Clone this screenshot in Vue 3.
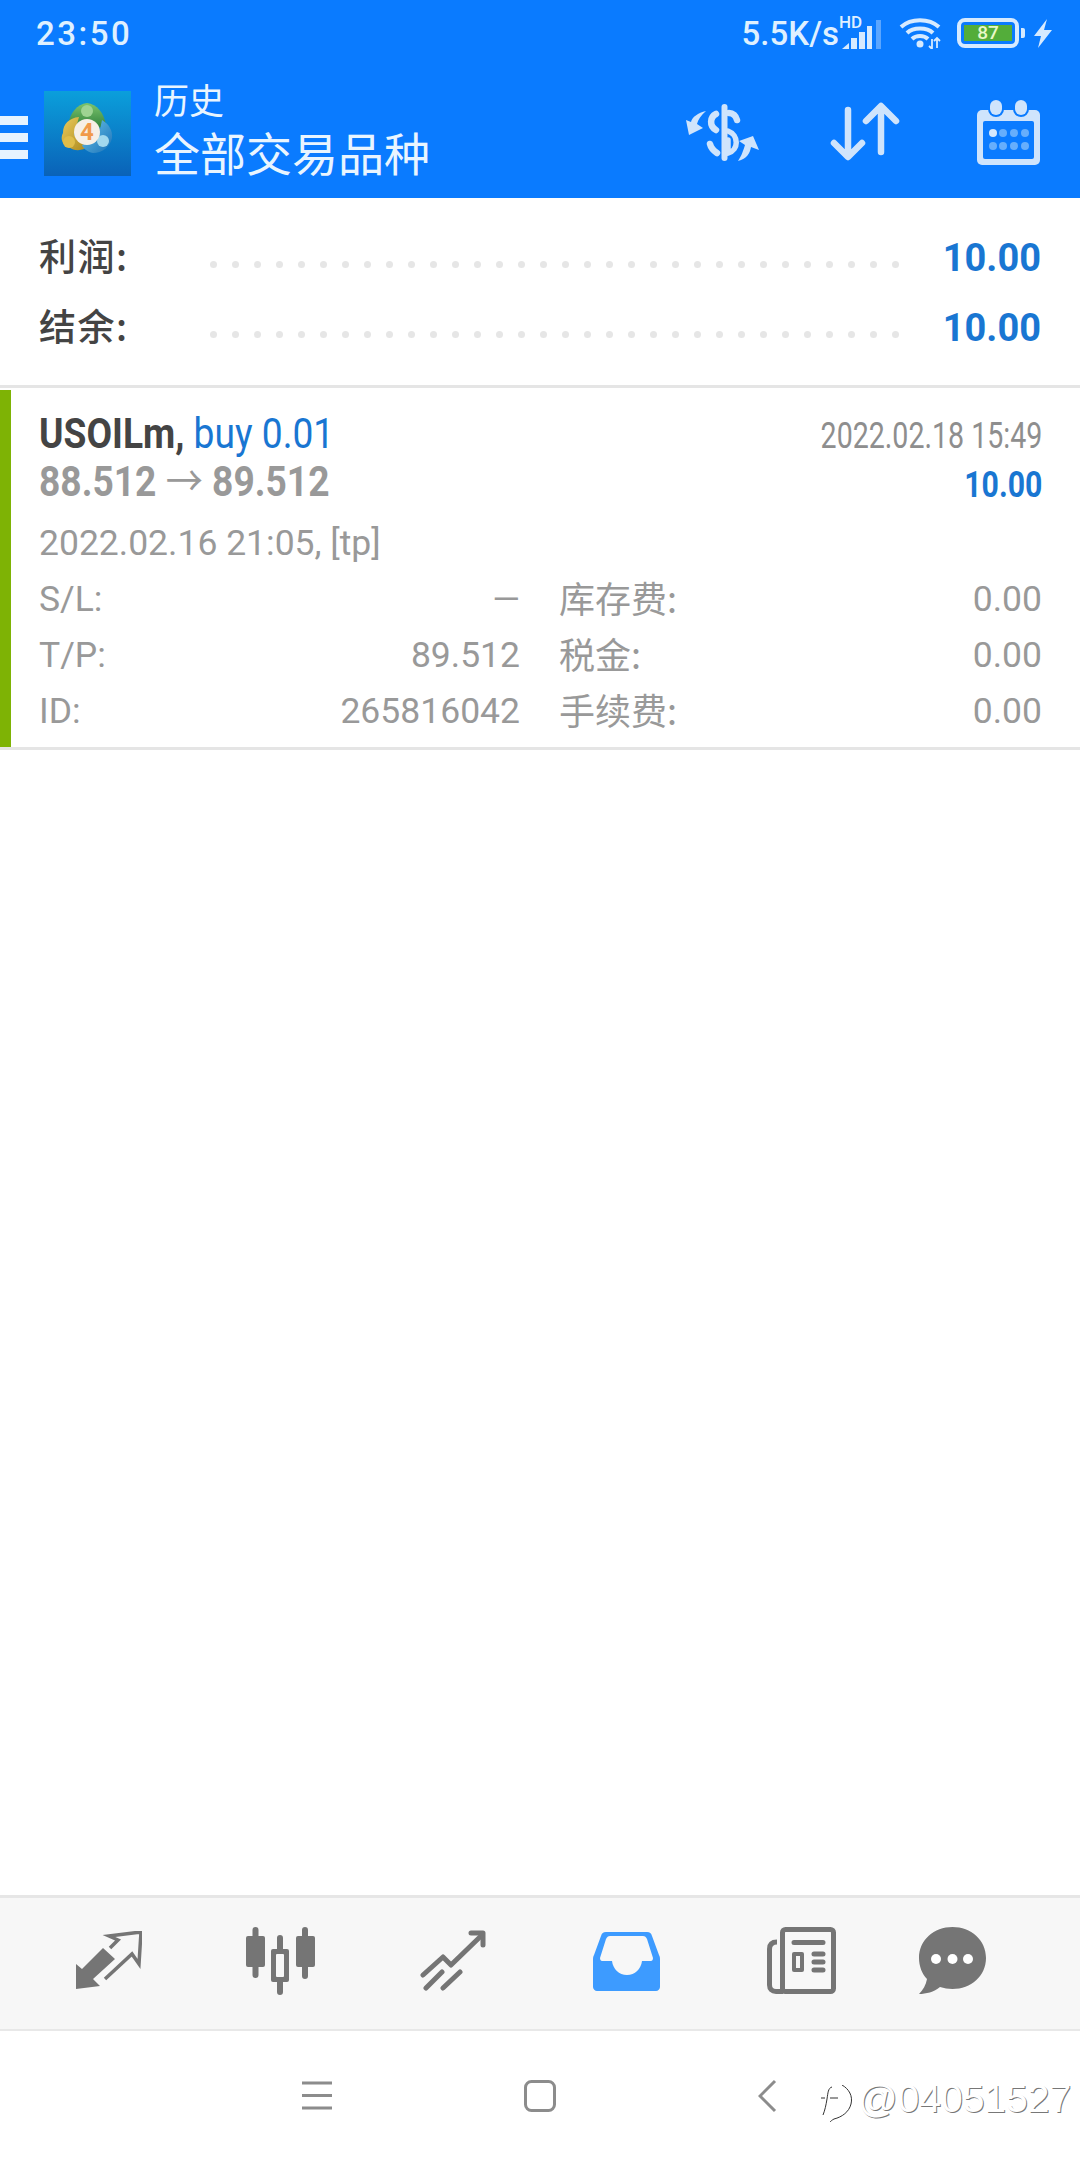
<script setup>
const dots = Array.from({ length: 32 })
const summary = [
  { label: '利润:', value: '10.00' },
  { label: '结余:', value: '10.00' }
]
const details = [
  ['S/L:', '—', '库存费:', '0.00'],
  ['T/P:', '89.512', '税金:', '0.00'],
  ['ID:', '265816042', '手续费:', '0.00']
]
</script>

<template>
  <div class="page">
    <header class="head">
      <div class="status">
        <span class="time">23:50</span>
        <div class="status-right">
          <span class="speed">5.5K/s</span>
          <span class="signal">
            <span class="hd">HD</span>
            <svg width="39" height="29" viewBox="0 0 39 29">
              <path d="M0 29L7 23V29Z" fill="#d6eaff" />
              <rect x="9" y="18" width="6" height="11" fill="#d6eaff" />
              <rect x="17" y="12" width="6" height="17" fill="#d6eaff" />
              <rect x="25" y="6" width="5" height="23" fill="#d6eaff" />
              <rect x="34" y="0" width="5" height="29" fill="#5ba6ff" />
            </svg>
          </span>
          <svg class="wifi" width="42" height="31" viewBox="0 0 42 31">
            <g fill="none" stroke="#d6eaff" stroke-width="4">
              <path d="M2 9C12 0 30 0 40 9" />
              <path d="M8 15C14 9 28 9 34 15" />
              <path d="M13 21C17 17 25 17 29 21" />
            </g>
            <circle cx="21" cy="26" r="3.5" fill="#d6eaff" />
            <path d="M33 21V31M30 28L33 31M38 20V30M35 23L38 20L41 23" fill="none" stroke="#d6eaff" stroke-width="1.8" />
          </svg>
          <span class="battery">
            <span class="battery-fill">87</span>
          </span>
          <span class="nub"></span>
          <svg class="bolt" width="18" height="29" viewBox="0 0 18 29">
            <path d="M13 0L0 17H7L4 29L18 11H10Z" fill="#d6eaff" />
          </svg>
        </div>
      </div>
      <div class="toolbar">
        <div class="burger"><i></i><i></i><i></i></div>
        <svg class="logo" width="87" height="85" viewBox="0 0 87 85">
          <defs>
            <linearGradient id="logoBg" x1="0" y1="0" x2="0" y2="1">
              <stop offset="0" stop-color="#0b9fdb" />
              <stop offset="1" stop-color="#0a62b8" />
            </linearGradient>
            <linearGradient id="green" x1="0" y1="0" x2="0" y2="1">
              <stop offset="0" stop-color="#7cc46c" />
              <stop offset="1" stop-color="#2d7f3c" />
            </linearGradient>
            <linearGradient id="gold" x1="0" y1="0" x2="1" y2="1">
              <stop offset="0" stop-color="#eccb5c" />
              <stop offset="1" stop-color="#a8871c" />
            </linearGradient>
            <linearGradient id="aqua" x1="0" y1="0" x2="1" y2="1">
              <stop offset="0" stop-color="#6cc4ea" />
              <stop offset="1" stop-color="#1a72b8" />
            </linearGradient>
          </defs>
          <rect width="87" height="85" fill="url(#logoBg)" />
          <path d="M24 34C26 22 33 13 43 12C53 13 60 22 62 34L52 38H34Z" fill="url(#green)" />
          <circle cx="43" cy="20" r="6" fill="#9ed392" />
          <path d="M35 26C25 27 19 33 19 42C16 47 18 55 25 56C31 61 40 60 45 54L30 44Z" fill="url(#gold)" />
          <circle cx="25" cy="51" r="6" fill="#dfbd4a" />
          <path d="M58 29C65 33 69 40 68 47C66 56 58 62 49 62C43 61 39 57 38 54L54 48Z" fill="url(#aqua)" />
          <circle cx="59" cy="50" r="6" fill="#a2d8ee" />
          <circle cx="43" cy="41" r="13" fill="#f6efe6" />
          <text x="43" y="49" text-anchor="middle" class="logo-four">4</text>
        </svg>
        <div class="titles">
          <div class="title-sm">历史</div>
          <div class="title-lg">全部交易品种</div>
        </div>
        <div class="actions">
          <svg width="74" height="57" viewBox="0 0 74 57">
            <rect x="36.500" y="0" width="6" height="57" rx="3" fill="#cfe4fc" />
            <g fill="none" stroke="#cfe4fc" stroke-width="6.500" stroke-linecap="round">
              <path d="M44 9C48 9 51 12 52 16" />
              <path d="M31 10C25 13 24 22 31 26" />
              <path d="M43 27C54 31 54 46 43 49V36" stroke-width="5.500" />
              <path d="M25 40C26 44 29 47 32 49" />
            </g>
            <path d="M21 7C13 9 7 13 6 18L1 16L4 31L18 24L12 20C13 16 16 11 21 7Z" fill="#cfe4fc" />
            <path d="M53 57C62 55 65 49 66 43L74 46L68 32L54 37L60 41C58 47 57 51 53 57Z" fill="#cfe4fc" />
          </svg>
          <svg class="swap" width="68" height="58" viewBox="0 0 68 58">
            <g fill="none" stroke="#cfe4fc" stroke-width="6.500" stroke-linecap="round" stroke-linejoin="round">
              <path d="M17 8V54M3 41L17 55L31 41" />
              <path d="M50 50V5M35 19L50 4L65 19" />
            </g>
          </svg>
          <svg width="63" height="65" viewBox="0 0 63 65">
            <rect y="10" width="63" height="55" rx="5" fill="#cfe4fc" />
            <rect x="6" y="21" width="51" height="38" rx="2" fill="#0a7bff" />
            <rect x="11" y="-2" width="16" height="19" rx="8" fill="#0a7bff" />
            <rect x="36" y="-2" width="16" height="19" rx="8" fill="#0a7bff" />
            <rect x="13" y="0" width="12" height="15" rx="6" fill="#cfe4fc" />
            <rect x="38" y="0" width="12" height="15" rx="6" fill="#cfe4fc" />
            <circle cx="16" cy="33" r="4" fill="#d5e8fd" />
            <g fill="#66aefc">
              <circle cx="26" cy="33" r="4" /><circle cx="37" cy="33" r="4" /><circle cx="48" cy="33" r="4" />
              <circle cx="16" cy="46" r="4" /><circle cx="26" cy="46" r="4" /><circle cx="37" cy="46" r="4" /><circle cx="48" cy="46" r="4" />
            </g>
          </svg>
        </div>
      </div>
    </header>

    <section class="summary">
      <div v-for="row in summary" :key="row.label" class="sum-row">
        <span class="sum-label">{{ row.label }}</span>
        <span class="dots"><i v-for="(d, i) in dots" :key="i"></i></span>
        <span class="sum-value">{{ row.value }}</span>
      </div>
    </section>

    <section class="card">
      <div class="card-top">
        <div class="card-left">
          <div class="line-title cond"><b>USOILm,</b> <span class="blue">buy 0.01</span></div>
          <div class="line-price cond">88.512 <span class="arrow">→</span> 89.512</div>
        </div>
        <div class="card-right">
          <div class="close-time cond-r">2022.02.18 15:49</div>
          <div class="profit cond-r">10.00</div>
        </div>
      </div>
      <div class="open-time">2022.02.16 21:05, [tp]</div>
      <div v-for="row in details" :key="row[0]" class="detail">
        <span>{{ row[0] }}</span>
        <span class="val">{{ row[1] }}</span>
        <span class="cn">{{ row[2] }}</span>
        <span class="val">{{ row[3] }}</span>
      </div>
    </section>

    <main class="blank"></main>

    <nav class="tabs">
      <svg width="67" height="59" viewBox="0 0 67 59">
        <path d="M1 33L7 38L28 17L40 28L18 48L25 55L1 58Z" fill="#757575" />
        <path d="M35 17L43 9L34 5L66 1L64 33L57 23L30 48" fill="none" stroke="#757575" stroke-width="3.500" />
      </svg>
      <svg class="tab-candle" width="70" height="68" viewBox="0 0 70 68">
        <g stroke="#757575" stroke-width="6" stroke-linecap="round">
          <path d="M10.500 3V48M35 11V65M60 3V49" />
        </g>
        <rect x="1" y="9" width="19" height="31" rx="2" fill="#757575" />
        <rect x="51" y="9" width="19" height="31" rx="2" fill="#757575" />
        <rect x="26" y="22" width="18" height="33" rx="2" fill="#757575" />
        <rect x="31" y="27" width="8" height="23" rx="1" fill="#f7f7f7" />
      </svg>
      <svg width="66" height="61" viewBox="0 0 66 61">
        <g fill="none" stroke="#757575" stroke-width="5" stroke-linecap="round" stroke-linejoin="round">
          <path d="M3 45L23 27L31 35L62 5" />
          <path d="M51 3H63V15" />
          <path d="M22 42L6 58M40 42L23 58" />
        </g>
      </svg>
      <svg class="tab-inbox" width="67" height="60" viewBox="0 0 67 60">
        <path d="M13 1H54C57 1 58 2 59 5L66 24C67 26 67 27 67 29V56C67 58 65 60 63 60H4C2 60 0 58 0 56V29C0 27 0 26 1 24L8 5C9 2 10 1 13 1Z" fill="#3d9bff" />
        <path d="M17 5H50C52 5 53 6 54 8L60 27C60 29 59 30 58 30H49C48 38 42 44 34 44C26 44 20 38 19 30H9C8 30 7 29 7 27L13 8C14 6 15 5 17 5Z" fill="#f7f7f7" />
      </svg>
      <svg class="tab-news" width="69" height="67" viewBox="0 0 69 67">
        <rect x="15.500" y="2.500" width="51" height="62" rx="3" fill="none" stroke="#757575" stroke-width="5" />
        <path d="M10 15C5 15 2.500 17 2.500 22V58C2.500 62 5 64.500 9 64.500H16" fill="none" stroke="#757575" stroke-width="5" />
        <path d="M27 15.500H56M47 27H56M47 35H56M47 43H56" fill="none" stroke="#757575" stroke-width="5" stroke-linecap="round" />
        <rect x="25" y="25" width="12" height="20" rx="2" fill="#757575" />
        <rect x="29" y="29" width="4" height="12" fill="#f7f7f7" />
      </svg>
      <svg class="chat" width="67" height="67" viewBox="0 0 67 67">
        <path d="M33.500 0C52 0 67 13 67 31C67 49 52 62 33.500 62C29 62 25 61 21 60C15 65 7 67 0 67C4 63 7 58 8 52C3 47 0 39 0 31C0 13 15 0 33.500 0Z" fill="#757575" />
        <circle cx="17" cy="32" r="5" fill="#fff" /><circle cx="33.500" cy="32" r="5" fill="#fff" /><circle cx="49" cy="32" r="5" fill="#fff" />
      </svg>
    </nav>

    <footer class="sysnav">
      <svg class="nav-menu" width="30" height="29" viewBox="0 0 30 29">
        <path d="M0 2H30M0 14.500H30M0 27H30" stroke="#8c8c8c" stroke-width="3" />
      </svg>
      <svg class="nav-home" width="32" height="32" viewBox="0 0 32 32">
        <rect x="1.500" y="1.500" width="29" height="29" rx="6" fill="none" stroke="#8c8c8c" stroke-width="3" />
      </svg>
      <svg class="nav-back" width="19" height="34" viewBox="0 0 19 34">
        <path d="M17 2L2 17L17 32" fill="none" stroke="#8c8c8c" stroke-width="3" />
      </svg>
      <div class="mark">
        <svg width="34" height="38" viewBox="0 0 34 38">
          <g fill="none" stroke="#333" stroke-width="1">
            <path d="M12 2C8 3 8 8 7 14C6 20 5 25 3 30" />
            <path d="M1 13H5M10 13H18" />
            <path d="M22 0C29 4 33 11 31 19C29 27 22 32 14 34C12 35 11 36 10 37" />
          </g>
        </svg>
        <span>@04051527</span>
      </div>
    </footer>
  </div>
</template>

<style scoped>
.page {
  position: relative;
  width: 1080px;
  height: 2160px;
  display: flex;
  flex-direction: column;
  overflow: hidden;
  background: #fff;
  font-family: Roboto, "Noto Sans CJK SC", sans-serif;
}
.head { background: #0a7bff; color: #fff; flex: none; }
.status {
  height: 66px;
  display: flex;
  align-items: center;
  justify-content: space-between;
  padding: 0 28px 0 36px;
  color: #dff0ff;
}
.time { font-size: 33px; font-weight: 500; letter-spacing: 2.500px; }
.status-right { display: flex; align-items: center; }
.speed { font-size: 33px; font-weight: 500; margin-right: 3px; }
.signal { position: relative; display: block; width: 39px; height: 29px; margin-top: 2px; }
.signal svg { display: block; }
.hd {
  position: absolute;
  left: -3px;
  top: -6px;
  font-size: 17px;
  font-weight: 500;
  line-height: 17px;
}
.wifi { margin-left: 18px; }
.battery {
  box-sizing: border-box;
  margin-left: 16px;
  width: 62px;
  height: 30px;
  border: 4px solid #d6eaff;
  border-radius: 8px;
  padding: 3px 3px;
  display: block;
}
.battery-fill {
  display: block;
  height: 16px;
  line-height: 16px;
  background: #53ad3a;
  text-align: center;
  font-size: 19px;
  font-weight: 500;
  color: #e8f8c8;
}
.nub { width: 4px; height: 10px; margin-left: 2px; background: #d6eaff; border-radius: 0 2px 2px 0; }
.bolt { margin-left: 9px; }
.toolbar { height: 132px; display: flex; align-items: center; padding-right: 40px; }
.burger { width: 28px; display: flex; flex-direction: column; gap: 8px; margin-top: 10px; }
.burger i { display: block; height: 9px; background: #e6f3ff; }
.logo { margin-left: 16px; margin-top: 3px; }
.titles { margin-left: 21px; margin-top: 6px; }
.title-sm { font-size: 35px; line-height: 40px; color: #e9f5ff; margin-top: -3px; margin-left: 2px; }
.title-lg { font-size: 46px; line-height: 60px; color: #e9f5ff; margin-left: 2px; margin-top: 2px; }
.actions { margin-left: auto; display: flex; align-items: center; gap: 75px; }
.actions svg { overflow: visible; }
.actions .swap { margin: -2px 3px 0 -3px; }
.logo-four { font: 700 24px Roboto, sans-serif; fill: #f19a4a; }

.summary { flex: none; height: 190px; box-sizing: border-box; padding: 25px 39px 0 39px; border-bottom: 3px solid #e5e5e5; }
.sum-row { height: 70px; display: flex; align-items: center; }
.sum-label { width: 171px; font-size: 37px; letter-spacing: 1.500px; font-weight: 500; color: #444; font-family: "Noto Sans CJK SC", sans-serif; margin-bottom: 7px; }
.dots { display: flex; gap: 15px; margin-top: 13px; }
.dots i { display: block; width: 7px; height: 7px; border-radius: 50%; background: #e6e6e6; }
.sum-value { margin-left: auto; font-size: 38px; font-weight: 700; color: #1976d2; }

.card {
  flex: none;
  box-sizing: border-box;
  margin-top: 2px;
  height: 360px;
  background: linear-gradient(#7eb305, #7eb305) left top / 11px 100% no-repeat;
  background-clip: padding-box;
  border-bottom: 3px solid #e5e5e5;
  padding: 21px 38px 0 39px;
  color: #999;
}
.card-top { display: flex; justify-content: space-between; height: 94px; }
.cond { transform: scaleX(0.885); transform-origin: left center; white-space: nowrap; }
.cond-r { transform-origin: right center; white-space: nowrap; text-align: right; }
.line-title { font-size: 42px; line-height: 46px; color: #444; }
.blue { color: #1976d2; }
.line-price { font-size: 42px; line-height: 41px; font-weight: 700; color: #999; }
.arrow { font-weight: 400; font-family: "Noto Sans CJK SC", sans-serif; }
.close-time { font-size: 36px; line-height: 46px; margin-top: 2px; color: #8e8e8e; transform: scaleX(0.794); }
.profit { font-size: 36px; line-height: 48px; margin-top: 2px; font-weight: 700; color: #1976d2; transform: scaleX(0.84); }
.open-time { font-size: 35.500px; line-height: 48px; margin-top: 14px; margin-bottom: 4px; color: #999; }
.detail { display: grid; grid-template-columns: 340px 141px 39px 1fr auto; height: 56px; line-height: 56px; font-size: 35.500px; }
.detail span { grid-row: 1; }
.detail span:nth-child(1) { grid-column: 1; }
.detail span:nth-child(2) { grid-column: 1 / 3; text-align: right; }
.detail span:nth-child(3) { grid-column: 4; }
.detail span:nth-child(4) { grid-column: 5; }
.cn { font-family: "Noto Sans CJK SC", sans-serif; font-size: 36px; margin-top: -2.500px; }

.blank { flex: 1; }
.tabs {
  flex: none;
  height: 136px;
  box-sizing: border-box;
  border-top: 3px solid #e6e6e6;
  border-bottom: 2px solid #e8e8e8;
  background: #f7f7f7;
  display: flex;
  align-items: center;
  gap: 105px;
  padding: 0 0 6px 75px;
}
.tabs .tab-candle { margin-left: -2px; }
.tabs .tab-inbox { margin-left: 2px; }
.tabs .tab-news { margin-left: 2px; }
.tabs .chat { margin-left: -22px; }
.sysnav { flex: none; height: 129px; display: flex; align-items: center; padding: 0 0 0 302px; background: #fff; }
.nav-home { margin-left: 192px; }
.nav-back { margin-left: 202px; }
.mark {
  position: absolute;
  left: 820px;
  top: 2077px;
  display: flex;
  align-items: flex-start;
  gap: 4px;
  font: 39px/44px "Liberation Sans", sans-serif;
  color: #fff;
  text-shadow: 1px 0.500px 0 #777;
}
.mark svg { margin-top: 8px; }
</style>
